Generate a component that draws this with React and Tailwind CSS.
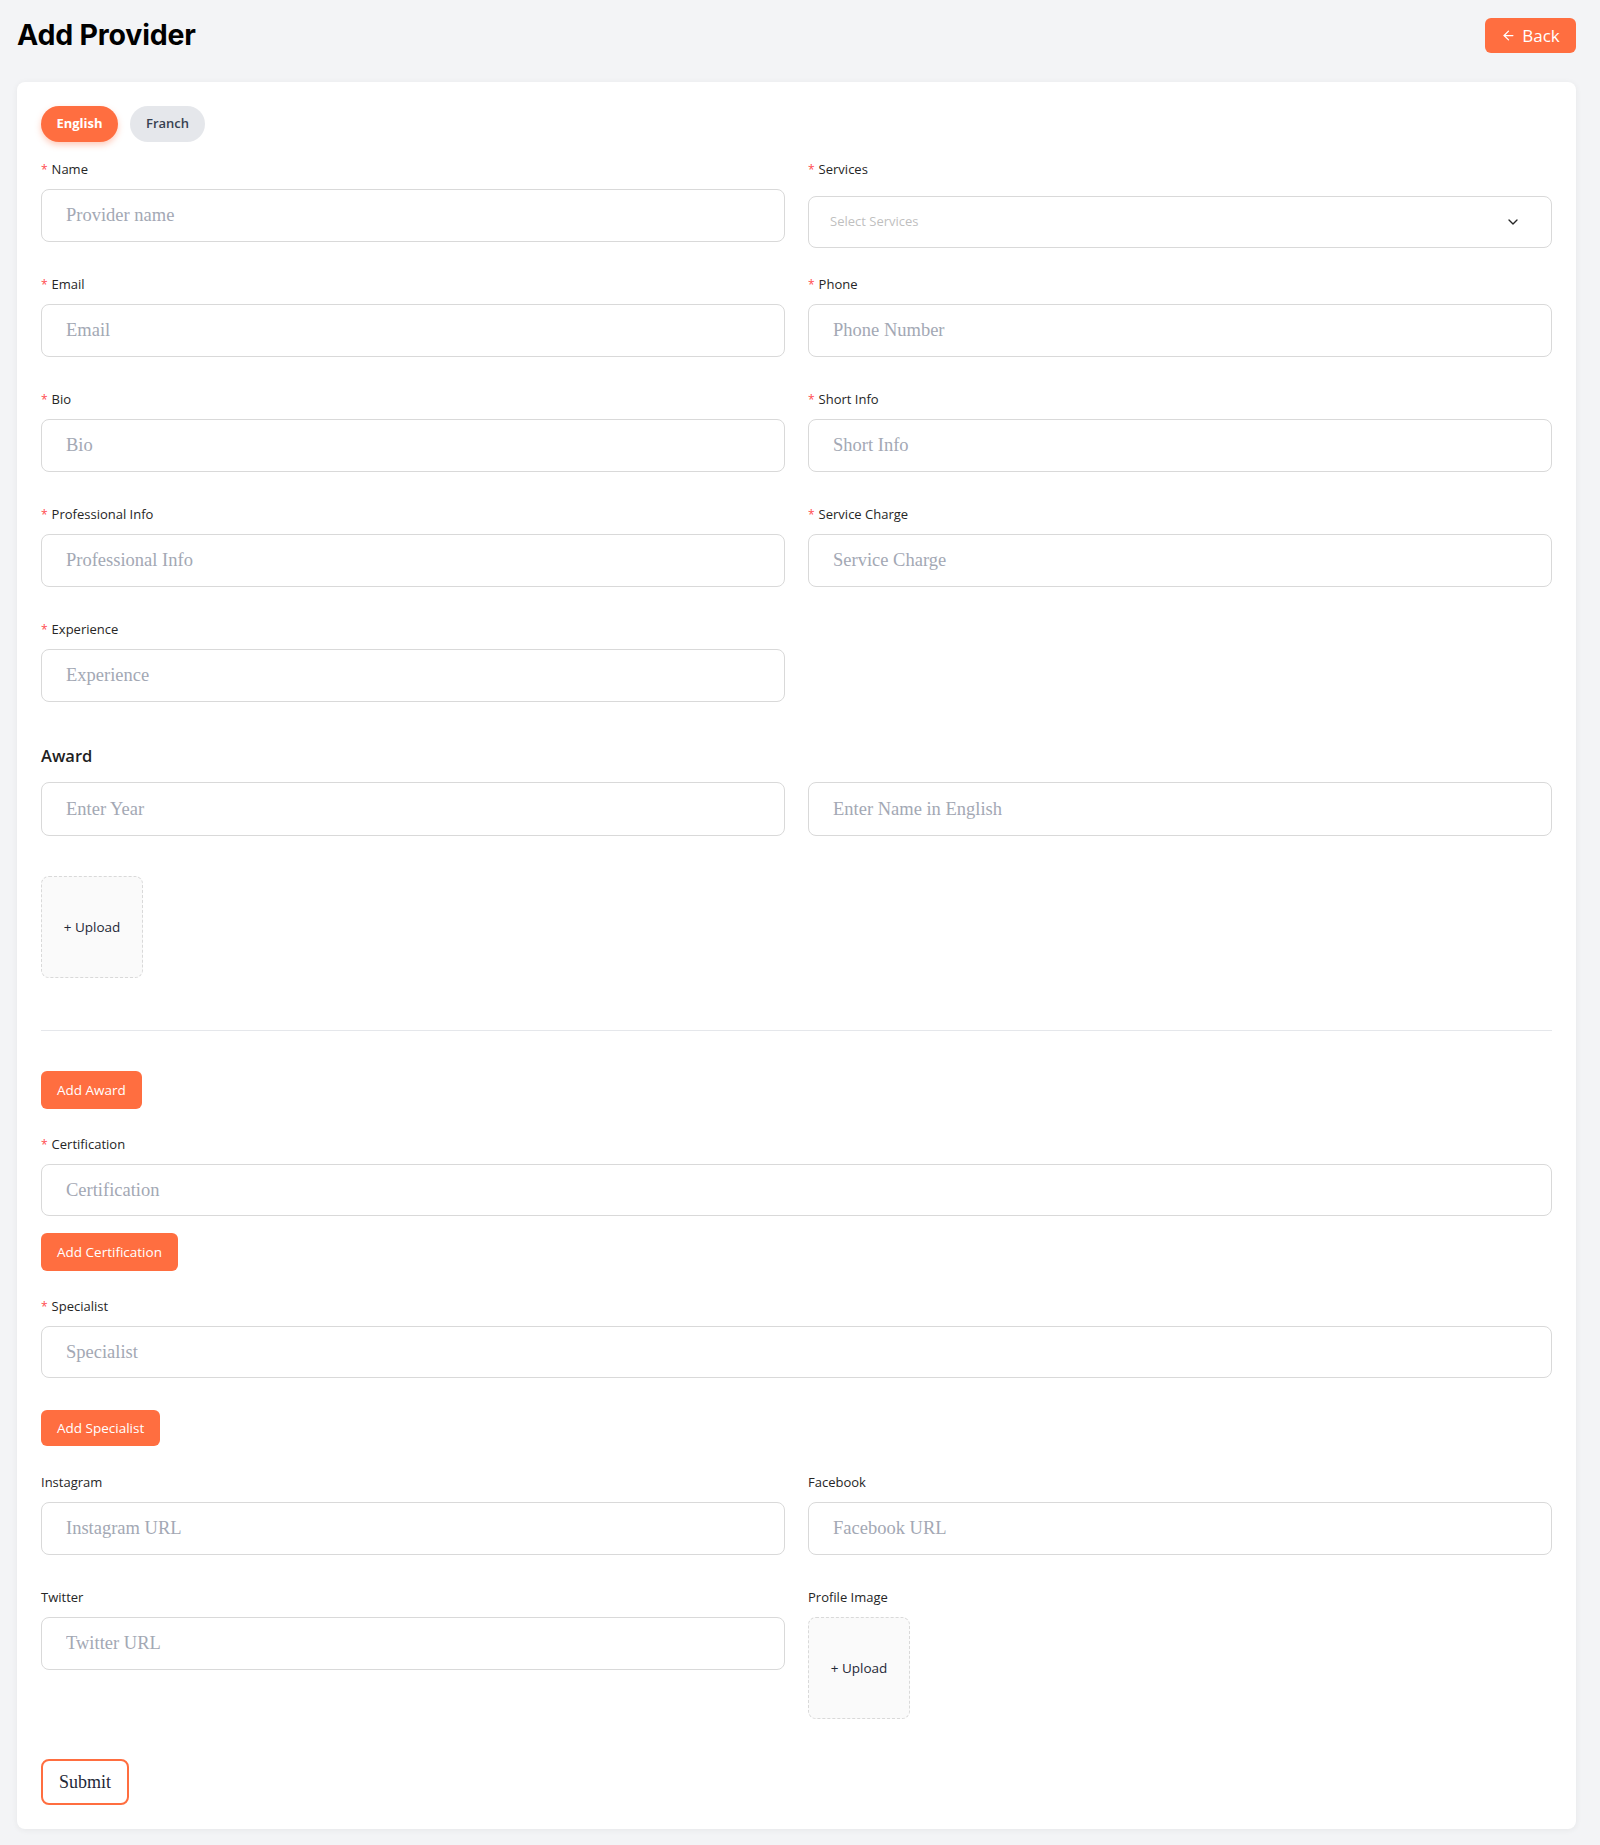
import { ArrowLeft, ChevronDown } from 'lucide-react'

const sans = "font-['Open_Sans',sans-serif]"
const serif = "font-['Liberation_Serif',serif]"

function Label({ children, required = true }) {
  return (
    <div className={`h-[23px] mb-2 flex items-center text-[13px] text-[#262626] ${sans}`}>
      {required && <span className="text-[#ff4d4f] mr-1 text-[12px]">*</span>}
      {children}
    </div>
  )
}

function TextInput({ placeholder, h = 'h-[53px]' }) {
  return (
    <input
      placeholder={placeholder}
      className={`w-full ${h} rounded-lg border border-[#d9d9d9] bg-white px-6 text-[18.5px] text-[#1f2937] placeholder:text-[#a3a8b4] outline-none ${serif}`}
    />
  )
}

function Field({ label, placeholder, required = true }) {
  return (
    <div className="mb-[31px]">
      <Label required={required}>{label}</Label>
      <TextInput placeholder={placeholder} />
    </div>
  )
}

function UploadBox() {
  return (
    <div className={`w-[102px] h-[102px] rounded-lg border border-dashed border-[#d9d9d9] bg-[#fafafa] flex items-center justify-center text-[13.5px] text-[#1f2937] ${sans}`}>
      + Upload
    </div>
  )
}

function OrangeButton({ children, h = 'h-[38px]', className = '' }) {
  return (
    <button className={`${h} px-4 rounded-md bg-[#ff6e40] text-white text-[13.5px] whitespace-nowrap ${sans} ${className}`}>
      {children}
    </button>
  )
}

export default function App() {
  return (
    <div className="min-h-screen bg-[#f3f4f6] pl-[17px] pr-[24px] pt-[18px] pb-[17px]">
      {/* Header */}
      <div className="flex items-center justify-between h-[35px] mb-[29px]">
        <h1 className="text-[28.5px] font-bold text-black font-['Inter',sans-serif] tracking-[-0.2px]">Add Provider</h1>
        <button className={`h-[35px] w-[91px] rounded-md bg-[#ff6e40] text-white text-[17px] flex items-center justify-center gap-1.5 ${sans}`}>
          <ArrowLeft size={15} strokeWidth={2} />
          Back
        </button>
      </div>

      {/* Card */}
      <div className="bg-white rounded-lg shadow-[0_1px_6px_rgba(0,0,0,0.06)] px-6 pt-6 pb-6">
        <div className={`flex gap-3 mb-4 ${sans}`}>
          <button className="h-9 w-[77px] rounded-full bg-[#ff6e40] text-white text-[13px] font-bold shadow-[0_3px_6px_rgba(255,110,64,0.35)]">
            English
          </button>
          <button className="h-9 w-[75px] rounded-full bg-[#e5e7eb] text-[#374151] text-[13px] font-semibold">
            Franch
          </button>
        </div>

        <div className="grid grid-cols-2 gap-x-[23px] items-start">
          <Field label="Name" placeholder="Provider name" />
          <div className="mb-[25px]">
            <Label>Services</Label>
            <div className="pt-[7px]">
              <div className="h-[52px] rounded-lg border border-[#d9d9d9] flex items-center justify-between pl-[21px] pr-[30px]">
                <span className={`text-[13px] text-[#bfbfbf] ${sans}`}>Select Services</span>
                <ChevronDown size={16} strokeWidth={2} className="text-[#262626]" />
              </div>
            </div>
          </div>
          <Field label="Email" placeholder="Email" />
          <Field label="Phone" placeholder="Phone Number" />
          <Field label="Bio" placeholder="Bio" />
          <Field label="Short Info" placeholder="Short Info" />
          <Field label="Professional Info" placeholder="Professional Info" />
          <Field label="Service Charge" placeholder="Service Charge" />
          <Field label="Experience" placeholder="Experience" />
        </div>

        {/* Award */}
        <h2 className={`mt-[9px] h-7 mb-3 flex items-center text-[16.5px] font-semibold text-[#1f1f1f] ${sans}`}>Award</h2>
        <div className="grid grid-cols-2 gap-x-[23px]">
          <TextInput placeholder="Enter Year" h="h-[54px]" />
          <TextInput placeholder="Enter Name in English" h="h-[54px]" />
        </div>
        <div className="mt-10">
          <UploadBox />
        </div>
        <div className="mt-[52px] border-t border-[#e5e7eb]" />
        <OrangeButton className="mt-10">Add Award</OrangeButton>

        <div className="mt-6">
          <Label>Certification</Label>
          <TextInput placeholder="Certification" h="h-[52px]" />
        </div>
        <OrangeButton className="mt-[17px]">Add Certification</OrangeButton>

        <div className="mt-6">
          <Label>Specialist</Label>
          <TextInput placeholder="Specialist" h="h-[52px]" />
        </div>
        <OrangeButton h="h-[36px]" className="mt-[32px]">Add Specialist</OrangeButton>

        <div className="mt-[25px] grid grid-cols-2 gap-x-[23px] items-start">
          <Field label="Instagram" placeholder="Instagram URL" required={false} />
          <Field label="Facebook" placeholder="Facebook URL" required={false} />
          <div>
            <Label required={false}>Twitter</Label>
            <TextInput placeholder="Twitter URL" />
          </div>
          <div>
            <Label required={false}>Profile Image</Label>
            <UploadBox />
          </div>
        </div>

        <button className={`mt-10 h-[46px] w-[88px] rounded-lg border-2 border-[#ff6e40] text-[18px] text-[#1f2937] ${serif}`}>
          Submit
        </button>
      </div>
    </div>
  )
}
